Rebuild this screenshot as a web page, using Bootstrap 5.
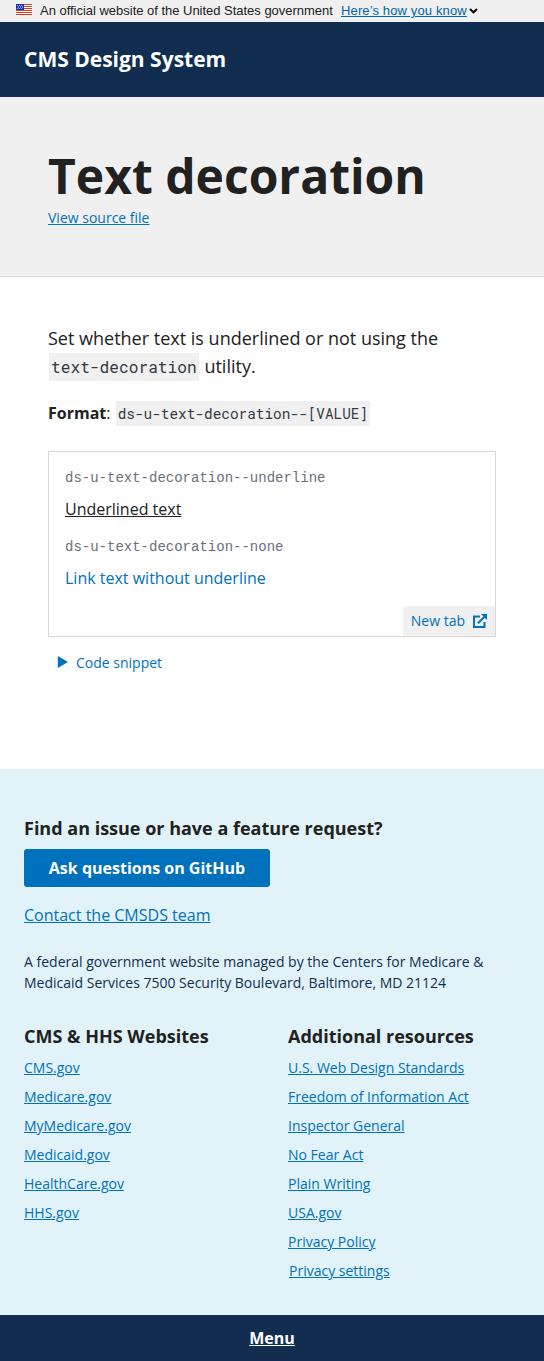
<!DOCTYPE html>
<html lang="en">
<head>
<meta charset="utf-8">
<meta name="viewport" content="width=device-width, initial-scale=1">
<title>Text decoration - CMS Design System</title>
<link href="https://cdn.jsdelivr.net/npm/bootstrap@5.3.0/dist/css/bootstrap.min.css" rel="stylesheet">
<style>
  body { font-family: "Open Sans", sans-serif; font-size: 16px; line-height: 24px; color: #212121; background: #fff; }
  a { color: #0071bc; text-underline-offset: auto; }
  .gov-banner { height: 22px; background: #f0f0f0; font: 13px/22px "Liberation Sans", sans-serif; }
  .gov-banner a { font-size: 13px; letter-spacing: .13px; color: #0064ab; }
  .gov-text { width: 293px; white-space: nowrap; letter-spacing: -.02px; }
  .chevron { margin-left: 2px; }
  .navy { background: #112e51; color: #fff; }
  .site-head { height: 75px; font-size: 21px; font-weight: 700; padding-bottom: 2px; }
  .title-band { height: 180px; background: #f0f0f0; border-bottom: 1px solid #d6d7d9; padding-top: 50px; }
  .title-band h1 { font-size: 48px; line-height: 58px; font-weight: 700; }
  .fs14 { font-size: 14px; line-height: 21px; }
  .source-link { margin-top: -3px; }
  .content-area { height: 492px; padding-top: 47px; }
  .lead-copy { font-size: 18px; line-height: 28px; }
  .content-area code { font-family: "Roboto Mono", "DejaVu Sans Mono", monospace; font-size: .9em; color: #323a45; background: #f0f0f0; padding: 3px 2px; margin: 0 1px; white-space: nowrap; }
  .content-area .lead-copy code { padding-bottom: 4px; }
  .format-line { padding-top: 4px; margin-bottom: 25px; }
  .example { height: 186px; border: 1px solid #d6d7d9; padding: 16px; }
  .example .cls { font: 14px/21px "Courier New", "Liberation Mono", monospace; color: #6a707a; }
  .new-tab { right: 0; bottom: 0; height: 30px; background: #f0f0f0; padding: 0 8px 1px; }
  .snippet { margin-top: 15px; padding-left: 7px; }
  .site-foot { height: 546px; background: #e1f3f8; padding-top: 46px; }
  .site-foot h2 { font-size: 18px; line-height: 26px; font-weight: 700; }
  .btn-ask { background: #0071bc; color: #fff; font-weight: 700; width: 246px; height: 38px; line-height: 36px; border-radius: 3px; padding: 0; }
  .contact { margin-top: 16px; }
  .address { margin-top: 24px; color: #112e51; }
  .foot-cols { margin-top: 30px; }
  .foot-links li { height: 29px; }
  .privacy-btn { margin-left: 1px; }
  .menu-bar { height: 46px; }
</style>
</head>
<body>
<div class="gov-banner d-flex align-items-center ps-3">
  <svg width="16" height="11" viewBox="0 0 16 11" class="me-2 mb-1" shape-rendering="crispEdges">
    <path fill="#fff" d="M0 0h16v11H0z"/>
    <path fill="#db3e1f" d="M8 0h8v1H8zM8 2h8v1H8zM8 4h8v1H8zM0 6h16v1H0zM0 8h16v1H0zM0 10h16v1H0z"/>
    <path fill="#1e33b1" d="M0 0h8v6H0z"/>
    <path fill="#fff" shape-rendering="auto" d="M1 1h.8v.8H1zM3 1h.8v.8H3zM5 1h.8v.8H5zM2 2.6h.8v.8H2zM4 2.6h.8v.8H4zM6 2.6h.8v.8H6zM1 4.2h.8v.8H1zM3 4.2h.8v.8H3zM5 4.2h.8v.8H5z"/>
  </svg>
  <span class="gov-text me-2">An official website of the United States government</span>
  <a href="#">Here’s how you know</a>
  <svg width="9" height="6" viewBox="0 0 9 6" class="chevron"><path d="M1 1.1 4.500 4.300 8 1.100" fill="none" stroke="#000" stroke-width="2"/></svg>
</div>
<header class="site-head navy d-flex align-items-center px-4">CMS Design System</header>
<section class="title-band px-5">
  <h1 class="m-0">Text decoration</h1>
  <a href="#" class="fs14 source-link d-inline-block">View source file</a>
</section>
<main class="content-area px-5">
  <p class="lead-copy mb-3">Set whether text is underlined or not using the <code>text-decoration</code> utility.</p>
  <p class="format-line"><b>Format</b>: <code>ds-u-text-decoration--[VALUE]</code></p>
  <div class="example position-relative">
    <div class="cls">ds-u-text-decoration--underline</div>
    <div class="mt-2 text-decoration-underline">Underlined text</div>
    <div class="cls mt-3">ds-u-text-decoration--none</div>
    <div class="mt-2"><a href="#" class="text-decoration-none">Link text without underline</a></div>
    <a href="#" class="new-tab fs14 position-absolute d-flex align-items-center text-decoration-none">New tab
      <svg width="14" height="14" viewBox="0 0 14 14" class="ms-2"><path d="M7 2.500H1V13h10.500V8M5 9.300 11.500 2.800" fill="none" stroke="#0071bc" stroke-width="2"/><path fill="#0071bc" d="M8 0H14v6z"/></svg>
    </a>
  </div>
  <a href="#" class="fs14 snippet d-flex align-items-center text-decoration-none"><svg width="13" height="13" viewBox="0 0 13 13" class="me-2"><path fill="#0071bc" d="M2.800 0 13 6 2.800 12z"/></svg>Code snippet</a>
</main>
<footer class="site-foot px-4">
  <h2 class="mb-2">Find an issue or have a feature request?</h2>
  <a href="#" class="btn btn-ask d-block">Ask questions on GitHub</a>
  <div class="contact"><a href="#">Contact the CMSDS team</a></div>
  <p class="address fs14 mb-0">A federal government website managed by the Centers for Medicare &amp; Medicaid Services 7500 Security Boulevard, Baltimore, MD 21124</p>
  <div class="row foot-cols">
    <div class="col-6">
      <h2 class="mb-2">CMS &amp; HHS Websites</h2>
      <ul class="foot-links fs14 list-unstyled m-0">
        <li><a href="#">CMS.gov</a></li>
        <li><a href="#">Medicare.gov</a></li>
        <li><a href="#">MyMedicare.gov</a></li>
        <li><a href="#">Medicaid.gov</a></li>
        <li><a href="#">HealthCare.gov</a></li>
        <li><a href="#">HHS.gov</a></li>
      </ul>
    </div>
    <div class="col-6 ps-3">
      <h2 class="mb-2">Additional resources</h2>
      <ul class="foot-links fs14 list-unstyled m-0">
        <li><a href="#">U.S. Web Design Standards</a></li>
        <li><a href="#">Freedom of Information Act</a></li>
        <li><a href="#">Inspector General</a></li>
        <li><a href="#">No Fear Act</a></li>
        <li><a href="#">Plain Writing</a></li>
        <li><a href="#">USA.gov</a></li>
        <li><a href="#">Privacy Policy</a></li>
        <li><a href="#" class="privacy-btn">Privacy settings</a></li>
      </ul>
    </div>
  </div>
</footer>
<nav class="menu-bar navy d-flex align-items-center justify-content-center"><a href="#" class="fw-bold text-white">Menu</a></nav>
<script src="https://cdn.jsdelivr.net/npm/bootstrap@5.3.0/dist/js/bootstrap.bundle.min.js"></script>
</body>
</html>
